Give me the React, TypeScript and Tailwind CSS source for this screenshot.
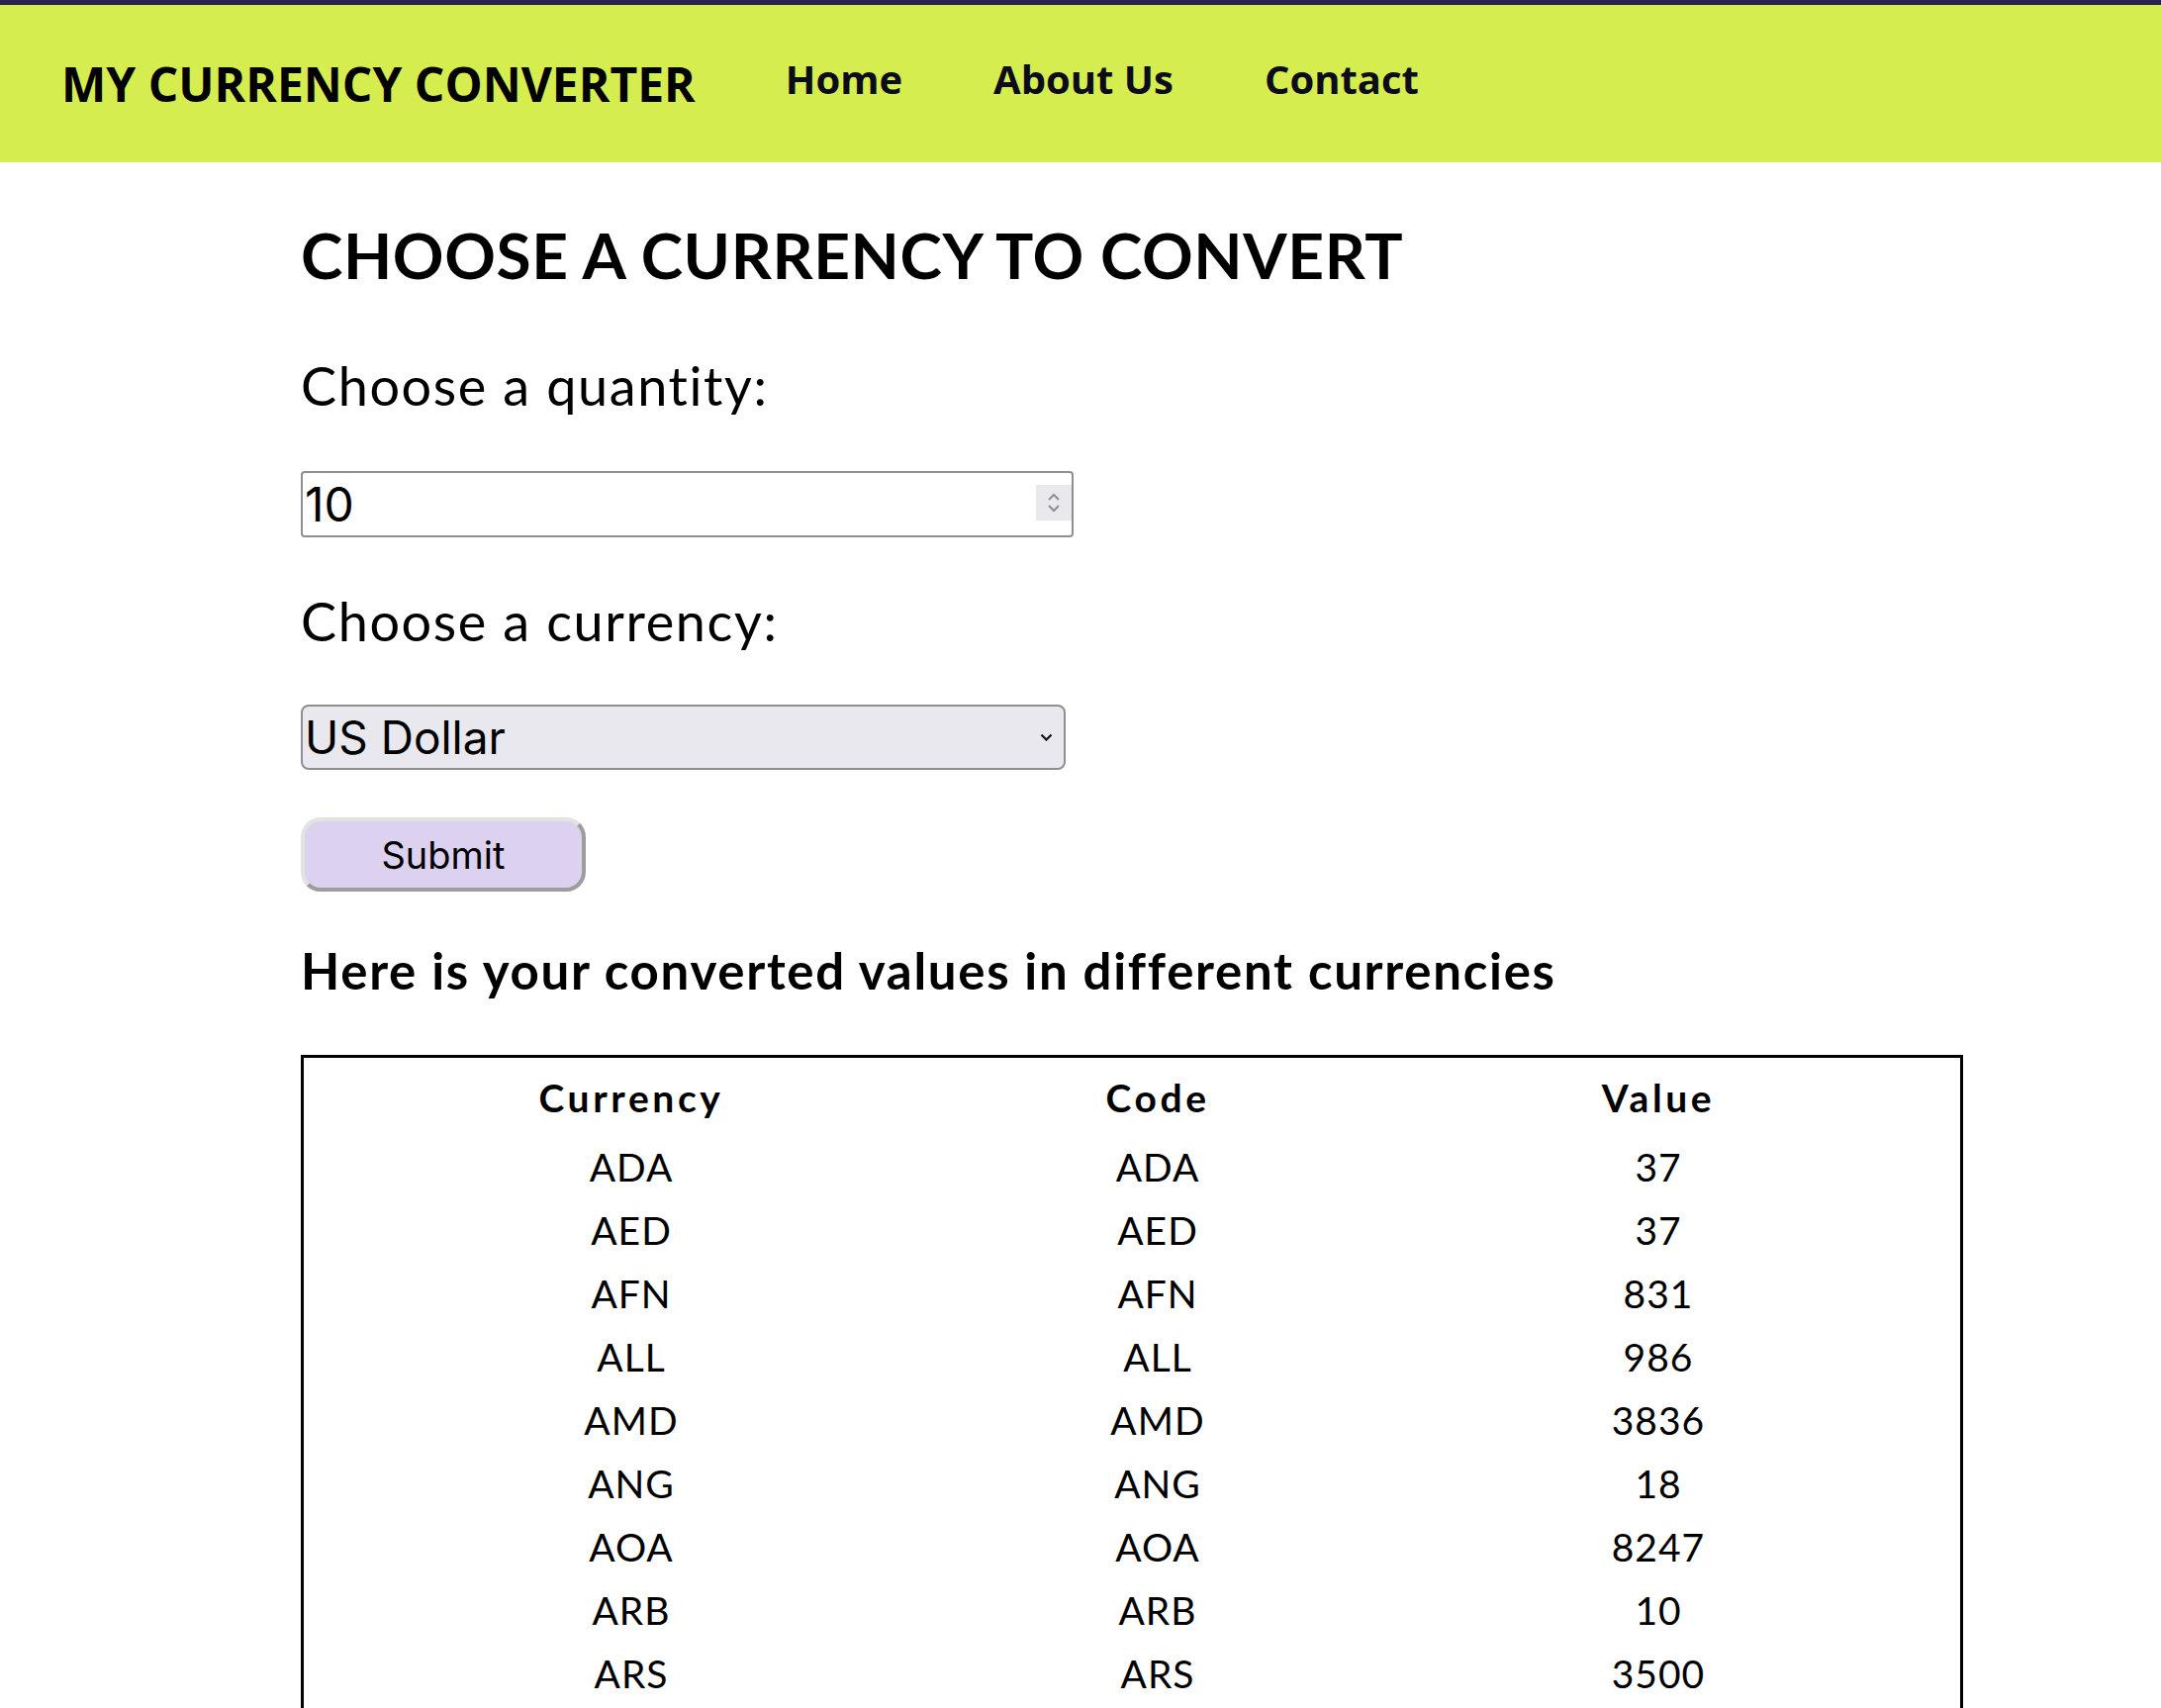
import { useState } from "react";

const rates = [
  { currency: "ADA", code: "ADA", value: 37 },
  { currency: "AED", code: "AED", value: 37 },
  { currency: "AFN", code: "AFN", value: 831 },
  { currency: "ALL", code: "ALL", value: 986 },
  { currency: "AMD", code: "AMD", value: 3836 },
  { currency: "ANG", code: "ANG", value: 18 },
  { currency: "AOA", code: "AOA", value: 8247 },
  { currency: "ARB", code: "ARB", value: 10 },
  { currency: "ARS", code: "ARS", value: 3500 },
];

const navLinks = ["Home", "About Us", "Contact"];

function Header() {
  return (
    <header className="flex h-[164px] items-center border-t-[5px] border-[#2b2151] bg-[#d6ed50] px-[62px] font-['Open_Sans',sans-serif] font-bold text-black">
      <h1 className="text-[48px] leading-none">MY CURRENCY CONVERTER</h1>
      <nav className="mb-[10px] ml-[91px] flex gap-[92px] text-[40px] leading-none text-[#0b0b1a]">
        {navLinks.map((link) => (
          <a key={link} href="#">
            {link}
          </a>
        ))}
      </nav>
    </header>
  );
}

function Spinner() {
  return (
    <div className="absolute right-[2px] top-[14px] flex h-[36px] w-[36px] flex-col items-center justify-center gap-[4px] bg-[#e8e8ed]">
      <svg width="12" height="8" viewBox="0 0 12 8" fill="none">
        <path d="M1 7 6 2l5 5" stroke="#8e8e93" strokeWidth="2" />
      </svg>
      <svg width="12" height="8" viewBox="0 0 12 8" fill="none">
        <path d="M1 1l5 5 5-5" stroke="#8e8e93" strokeWidth="2" />
      </svg>
    </div>
  );
}

export default function App() {
  const [qty, setQty] = useState("10");

  return (
    <div className="min-h-screen bg-white text-black">
      <Header />
      <main className="pl-[304px] font-['Lato',sans-serif]">
        <h2 className="mt-[62px] text-[64px] font-bold leading-none tracking-[0.6px]">
          CHOOSE A CURRENCY TO CONVERT
        </h2>

        <p className="mt-[73px] text-[54px] leading-none tracking-[1.6px]">
          Choose a quantity:
        </p>
        <div className="relative mt-[59px] h-[67px] w-[781px]">
          <input
            type="text"
            value={qty}
            onChange={(e) => setQty(e.target.value)}
            className="h-full w-full rounded-[4px] border-2 border-[#8f8e96] bg-white pl-[2px] font-['Inter',sans-serif] text-[48px] leading-none outline-none"
          />
          <Spinner />
        </div>

        <p className="mt-[58px] text-[54px] leading-none tracking-[1.6px]">
          Choose a currency:
        </p>
        <div className="relative mt-[57px] h-[66px] w-[773px]">
          <select className="h-full w-full appearance-none rounded-[8px] border-2 border-[#8f8e97] bg-[#e9e8ee] pl-[2px] font-['Inter',sans-serif] text-[46px] leading-none outline-none">
            <option>US Dollar</option>
            <option>Euro</option>
            <option>British Pound</option>
          </select>
          <svg
            className="pointer-events-none absolute right-[13px] top-[29px]"
            width="13"
            height="8"
            viewBox="0 0 13 8"
            fill="none"
          >
            <path d="M1.5 1.5l5 5 5-5" stroke="#111" strokeWidth="2.2" />
          </svg>
        </div>

        <button className="mt-[48px] h-[75px] w-[288px] rounded-[20px] border-4 border-t-[#e3e3e3] border-l-[#e3e3e3] border-r-[#9d9d9d] border-b-[#9d9d9d] bg-[#dcd2f0] font-['Inter',sans-serif] text-[38px] leading-none">
          Submit
        </button>

        <h3 className="mt-[54px] text-[51px] font-bold leading-none tracking-[1.7px]">
          Here is your converted values in different currencies
        </h3>

        <div className="mt-[60px] w-[1680px] border-[3px] border-black pb-[24px] pt-[8px] text-center">
          <div className="grid h-[64px] grid-cols-[662px_402px_1fr] items-center text-[39px] font-bold leading-none tracking-[3.6px]">
            <span>Currency</span>
            <span>Code</span>
            <span>Value</span>
          </div>
          <div className="mt-[6px]">
            {rates.map((r) => (
              <div
                key={r.code}
                className="grid h-[64px] grid-cols-[662px_402px_1fr] items-center text-[39px] leading-none tracking-[1px]"
              >
                <span>{r.currency}</span>
                <span>{r.code}</span>
                <span>{r.value}</span>
              </div>
            ))}
          </div>
        </div>
      </main>
    </div>
  );
}
